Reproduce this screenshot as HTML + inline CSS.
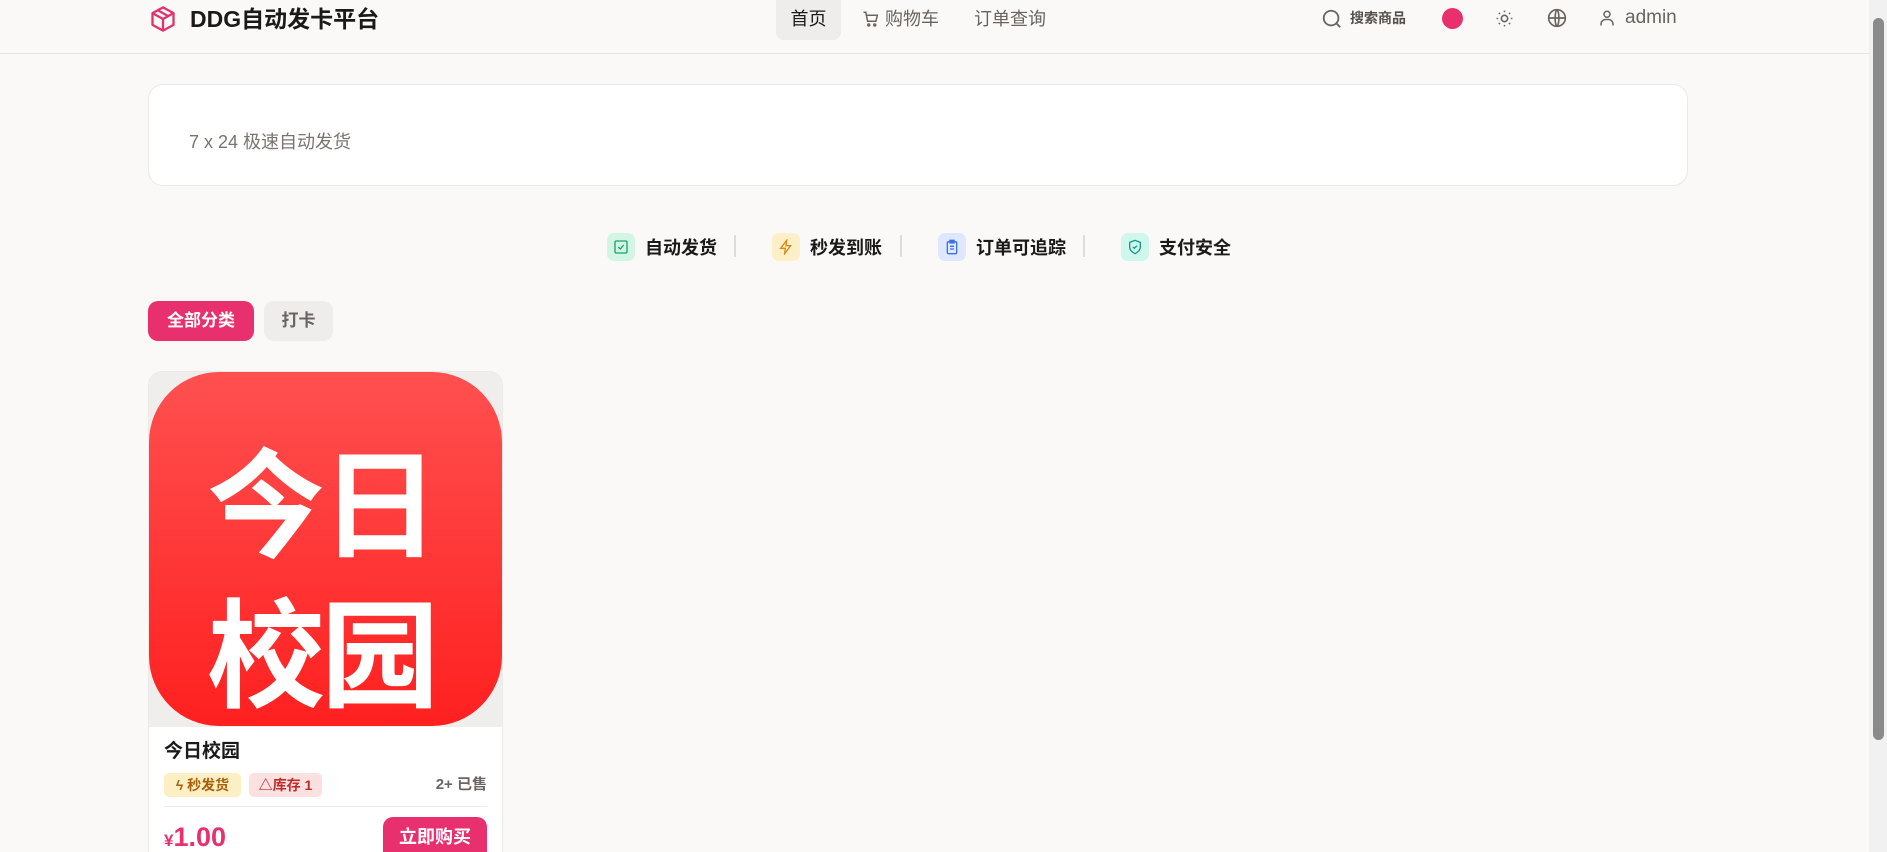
<!DOCTYPE html>
<html style="width:1887px;height:852px;overflow:hidden"><head><meta charset="utf-8"><style>
*{margin:0;padding:0;box-sizing:border-box}
body{width:1887px;height:852px;overflow:hidden;background:#faf9f7;font-family:"Liberation Sans","Noto Sans CJK SC",sans-serif;color:#1a1a1a;position:relative}
.abs{position:absolute}
.hdr{left:0;top:0;width:1869px;height:54px;border-bottom:1px solid #e6e3e0}
.nav{font-size:18px;color:#6b6460;top:0;height:40px;line-height:38px}
.sb{right:0;top:0;width:18px;height:852px;background:#f1f1f1}
.sb div{position:absolute;left:4px;top:18px;width:11px;height:722px;background:#8a8a8a;border-radius:6px}
.feat{top:231px;height:32px;display:flex;align-items:center;font-size:18px;font-weight:bold}
.ic{width:28px;height:28px;border-radius:7px;display:flex;align-items:center;justify-content:center;margin-right:10px}
.div{top:235px;width:2px;height:22px;background:#dedbd8}
.pill{top:301px;height:40px;line-height:40px;border-radius:10px;font-size:17px;font-weight:bold;text-align:center}
</style></head><body>
<div class="abs hdr"></div>
<svg class="abs" style="left:149px;top:5px" width="28" height="28" viewBox="0 0 24 24" fill="none" stroke="#e0336f" stroke-width="2" stroke-linejoin="round"><path d="M12 2l9 5v10l-9 5-9-5V7z"/><path d="M3 7l9 5 9-5M12 12v10M7.5 4.5l9 5"/></svg>
<div class="abs" style="left:190px;top:4px;font-size:23px;font-weight:bold;line-height:30px">DDG自动发卡平台</div>
<div class="abs nav" style="left:776px;width:65px;background:#efedeb;border-radius:0 0 8px 8px;text-align:center;color:#1a1a1a">首页</div>
<svg class="abs" style="left:862px;top:10px" width="18" height="18" viewBox="0 0 24 24" fill="none" stroke="#6b6460" stroke-width="2"><path d="M2 3h3l2.5 12h11l2-8H6"/><circle cx="9" cy="20" r="1.3"/><circle cx="17" cy="20" r="1.3"/></svg>
<div class="abs nav" style="left:885px">购物车</div>
<div class="abs nav" style="left:974px">订单查询</div>
<svg class="abs" style="left:1321px;top:8px" width="22" height="22" viewBox="0 0 24 24" fill="none" stroke="#6b6460" stroke-width="2"><circle cx="11" cy="11" r="8"/><path d="M17 17l4 4"/></svg>
<div class="abs" style="left:1350px;top:8px;font-size:14px;font-weight:bold;color:#55504c;line-height:20px">搜索商品</div>
<div class="abs" style="left:1442px;top:8px;width:21px;height:21px;border-radius:50%;background:#e8306e"></div>
<svg class="abs" style="left:1495px;top:9px" width="19" height="19" viewBox="0 0 24 24" fill="none" stroke="#6b6460" stroke-width="2"><circle cx="12" cy="12" r="4"/><path d="M12 2v2M12 20v2M2 12h2M20 12h2M4.9 4.9l1.4 1.4M17.7 17.7l1.4 1.4M4.9 19.1l1.4-1.4M17.7 6.3l1.4-1.4"/></svg>
<svg class="abs" style="left:1547px;top:8px" width="20" height="20" viewBox="0 0 24 24" fill="none" stroke="#6b6460" stroke-width="2"><circle cx="12" cy="12" r="10"/><path d="M2 12h20M12 2c3 3 3 17 0 20M12 2c-3 3-3 17 0 20"/></svg>
<svg class="abs" style="left:1598px;top:8px" width="18" height="20" viewBox="0 0 24 24" fill="none" stroke="#6b6460" stroke-width="2"><circle cx="12" cy="7" r="4"/><path d="M4 22v-2a6 6 0 0 1 6-6h4a6 6 0 0 1 6 6v2"/></svg>
<div class="abs" style="left:1625px;top:6px;font-size:19px;color:#6b6460;line-height:24px">admin</div>
<div class="abs sb"><div></div></div>

<div class="abs" style="left:148px;top:84px;width:1540px;height:102px;background:#fff;border:1px solid #ece9e6;border-radius:15px"></div>
<div class="abs" style="left:189px;top:130px;font-size:18px;color:#7a7370;line-height:24px">7 x 24 极速自动发货</div>

<div class="abs feat" style="left:607px"><div class="ic" style="background:#d3f5e4"><svg width="16" height="16" viewBox="0 0 24 24" fill="none" stroke="#1aa36a" stroke-width="2"><rect x="3" y="3" width="18" height="18" rx="2"/><path d="M8 12l3 3 5-6"/></svg></div>自动发货</div>
<div class="abs div" style="left:734px"></div>
<div class="abs feat" style="left:772px"><div class="ic" style="background:#fdf0c8"><svg width="16" height="16" viewBox="0 0 24 24" fill="none" stroke="#d98a10" stroke-width="2"><path d="M13 2L4 14h7l-1 8 9-12h-7z"/></svg></div>秒发到账</div>
<div class="abs div" style="left:900px"></div>
<div class="abs feat" style="left:938px"><div class="ic" style="background:#dde8fd"><svg width="16" height="16" viewBox="0 0 24 24" fill="none" stroke="#3c6fe0" stroke-width="2"><rect x="5" y="4" width="14" height="18" rx="2"/><path d="M9 2h6v4H9zM9 11h6M9 15h6"/></svg></div>订单可追踪</div>
<div class="abs div" style="left:1083px"></div>
<div class="abs feat" style="left:1121px"><div class="ic" style="background:#cff7ee"><svg width="16" height="16" viewBox="0 0 24 24" fill="none" stroke="#139c85" stroke-width="2"><path d="M12 2l8 3v7c0 5-4 8-8 10-4-2-8-5-8-10V5z"/><path d="M9 12l2 2 4-4"/></svg></div>支付安全</div>

<div class="abs pill" style="left:148px;width:106px;background:#e8306e;color:#fff">全部分类</div>
<div class="abs pill" style="left:264px;width:69px;background:#efedeb;color:#6b6460">打卡</div>

<div class="abs" style="left:148px;top:371px;width:355px;height:481px;background:#fff;border:1px solid #ece9e6;border-bottom:none;border-radius:14px 14px 0 0;overflow:hidden">
<div style="width:355px;height:355px;background:#f0eeec;position:relative">
<div style="position:absolute;left:0;top:0;width:353px;height:354px;border-radius:70px;background:linear-gradient(#ff5050,#ff2020);color:#fff;font-weight:bold;font-size:118px;line-height:150px;padding:50px 0 0 58px;letter-spacing:-4px;font-family:'Noto Sans CJK SC',sans-serif">今日<br>校园</div>
</div>
</div>
<div class="abs" style="left:164px;top:740px;font-size:19px;font-weight:bold;line-height:24px">今日校园</div>
<div class="abs" style="left:164px;top:773px;width:77px;height:24px;background:#fdefc4;border-radius:5px;color:#a8600a;font-size:14px;font-weight:bold;line-height:24px;text-align:center">ϟ 秒发货</div>
<div class="abs" style="left:249px;top:773px;width:73px;height:24px;background:#fde0e0;border-radius:5px;color:#c42a2a;font-size:14px;font-weight:bold;line-height:24px;text-align:center">△库存 1</div>
<div class="abs" style="left:420px;top:775px;width:67px;text-align:right;font-size:15px;font-weight:bold;color:#6b6460;line-height:20px">2+ 已售</div>
<div class="abs" style="left:164px;top:806px;width:323px;height:1px;background:#eeebe8"></div>
<div class="abs" style="left:164px;top:820px;color:#e8306e;font-weight:bold;line-height:34px"><span style="font-size:17px">¥</span><span style="font-size:27px">1.00</span></div>
<div class="abs" style="left:383px;top:817px;width:104px;height:35px;background:#e8306e;border-radius:10px 10px 0 0;color:#fff;font-size:18px;font-weight:bold;text-align:center;line-height:40px;overflow:hidden">立即购买</div>
</body></html>
